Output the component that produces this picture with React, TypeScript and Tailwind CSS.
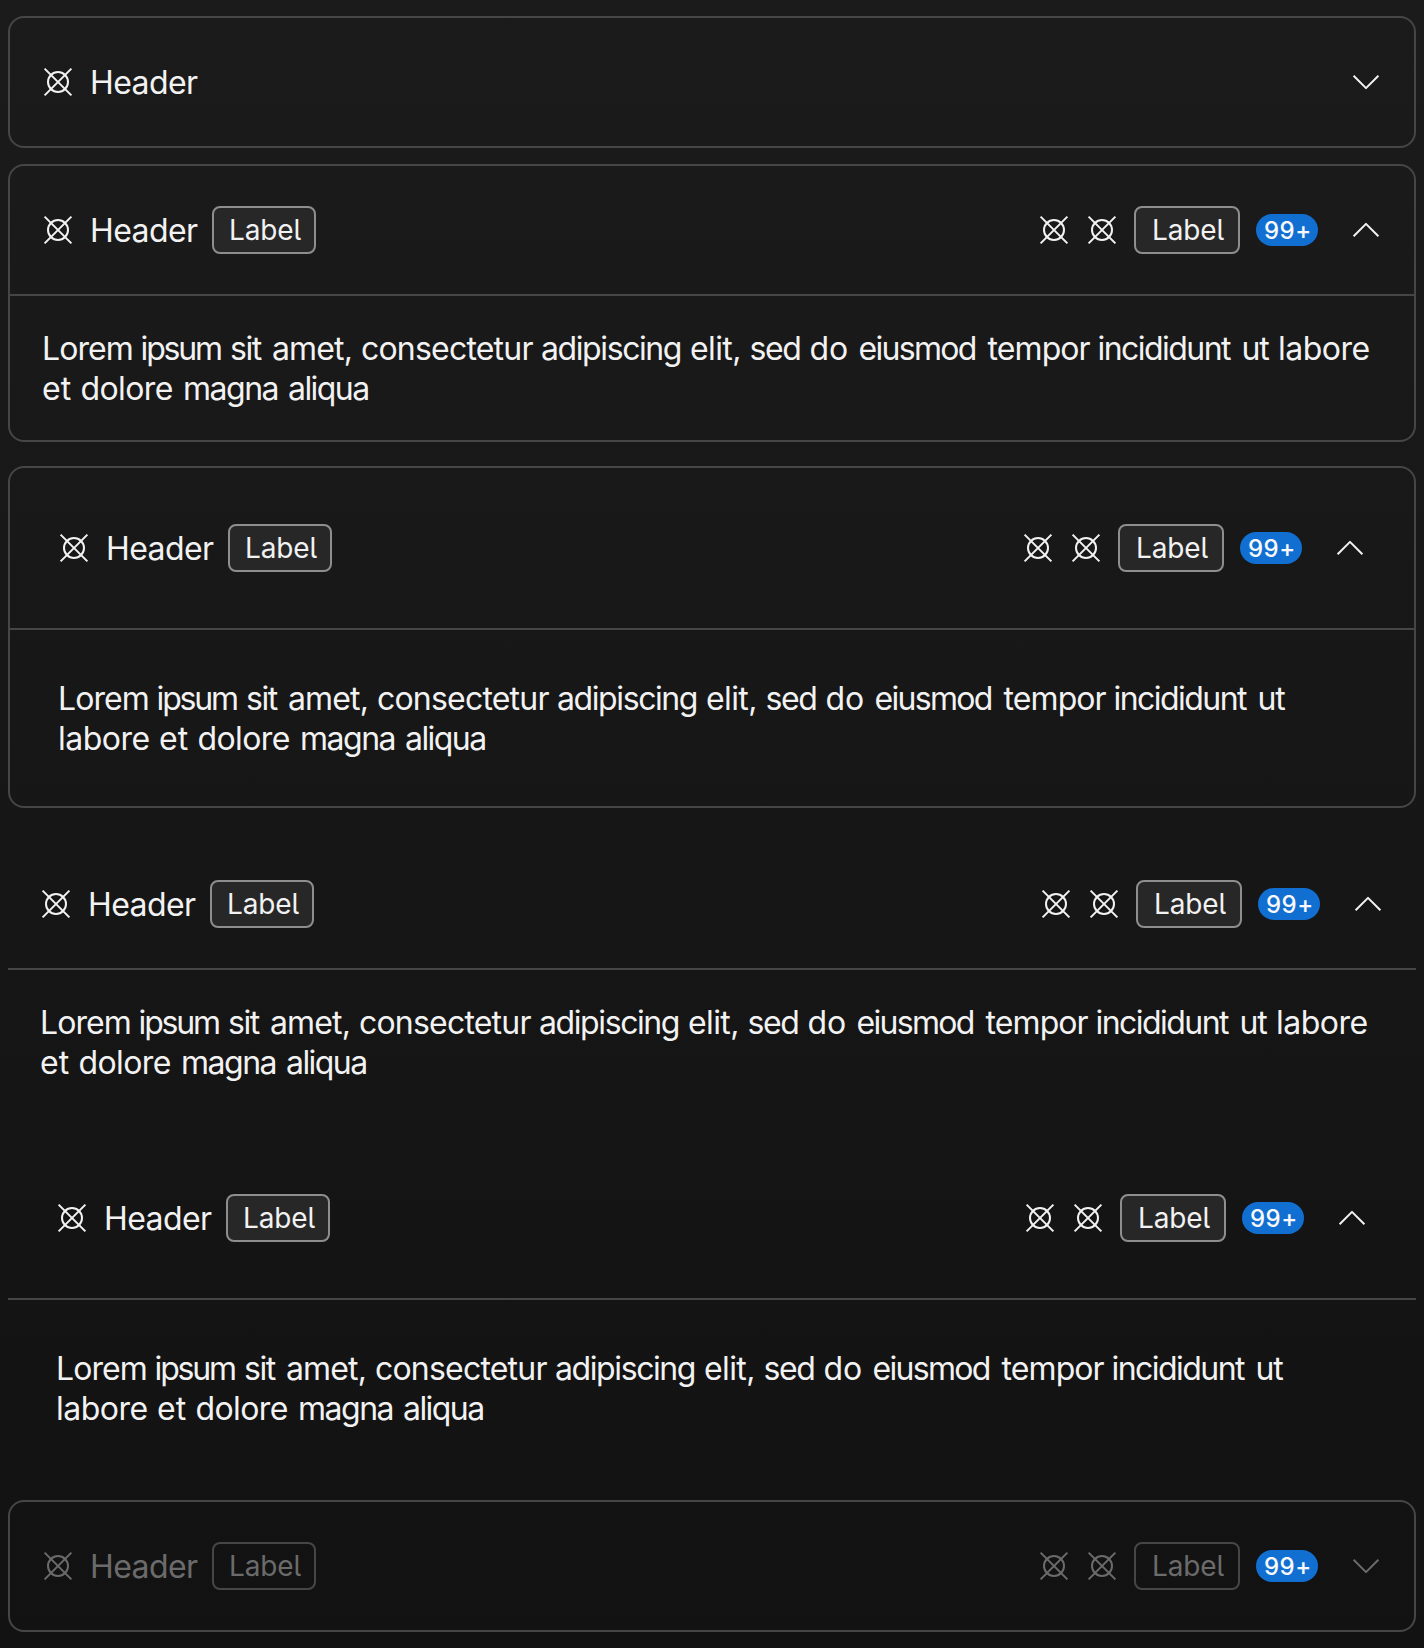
import React from "react";

function Glyph() {
  return (
    <svg viewBox="0 0 32 32" className="size-8 shrink-0" fill="none" stroke="currentColor" strokeWidth="2">
      <circle cx="16" cy="16" r="10" />
      <path d="M2.6 2.6L29.4 29.4M29.4 2.6L2.6 29.4" />
    </svg>
  );
}

function Chevron({ open }: { open: boolean }) {
  return (
    <svg
      viewBox="0 0 32 32"
      className="ml-4 size-8 shrink-0"
      fill="none"
      stroke="currentColor"
      strokeWidth="2"
      strokeLinejoin="round"
    >
      <path d={open ? "M3.6 22.3L16 9.9L28.4 22.3" : "M3.6 9.7L16 22.1L28.4 9.7"} />
    </svg>
  );
}

function Tag({ disabled, wide }: { disabled?: boolean; wide?: boolean }) {
  return (
    <span
      className={`flex h-12 shrink-0 items-center rounded-lg border-2 text-[28px] leading-none tracking-[-0.15px] [font-feature-settings:'cv05'] ${
        wide ? "w-[106px] pl-4" : "ml-[14px] w-[104px] pl-[15px]"
      } ${disabled ? "border-[#464646]" : "border-[#8e8e8e] bg-[#272727]"}`}
    >
      Label
    </span>
  );
}

// Each word with its advance (including the following space) and tracking, in pixels.
const words: [string, number, number][] = [
  ["Lorem", 98.6, -0.9],
  ["ipsum", 89.4, -2.2],
  ["sit", 42, -1.4],
  ["amet,", 89, -0.85],
  ["consectetur", 180, -0.8],
  ["adipiscing", 149, -1.4],
  ["elit,", 59.5, -0.6],
  ["sed", 60, -1.4],
  ["do", 49, 0],
  ["eiusmod", 129, -1.7],
  ["tempor", 110, -0.9],
  ["incididunt", 144, -1.55],
  ["ut", 36.5, -1.2],
  ["labore", 101, -0.5],
  ["et", 38.5, 0],
  ["dolore", 102.5, -0.6],
  ["magna", 105, -1.5],
  ["aliqua", 90, -1.55],
];

function Body({ large }: { large: boolean }) {
  return (
    <p
      className={`flex flex-wrap text-[32px] leading-10 text-[#f2f2f2] ${
        large ? "px-12 pt-[49px] pb-[47px]" : "px-8 pt-[33px] pb-[31px]"
      }`}
    >
      {words.map(([word, width, tracking]) => (
        <span key={word} className="shrink-0 whitespace-pre" style={{ width, letterSpacing: tracking }}>
          {word + " "}
        </span>
      ))}
    </p>
  );
}

type PanelProps = {
  className?: string;
  open?: boolean;
  large?: boolean;
  framed?: boolean;
  disabled?: boolean;
  extras?: boolean;
};

function Panel({ className = "", open = false, large = false, framed = true, disabled = false, extras = true }: PanelProps) {
  return (
    <section className={`${framed ? "rounded-2xl border-2 border-[#464646]" : ""} ${className}`}>
      <div
        className={`flex items-center ${large ? "h-40 px-12" : "h-32 px-8"} ${open ? "box-content border-b-2 border-[#464646]" : ""} ${
          disabled ? "text-[#6b6b6b]" : "text-[#f2f2f2]"
        }`}
      >
        <Glyph />
        <span className="ml-4 w-[108px] pt-0.5 text-[32px] leading-10 tracking-[-0.6px] whitespace-nowrap">Header</span>
        {extras && <Tag disabled={disabled} />}
        <div className="ml-auto flex items-center gap-4">
          {extras && (
            <>
              <Glyph />
              <Glyph />
              <Tag wide disabled={disabled} />
              <span className="flex h-8 w-[62px] items-center rounded-full bg-[#116fd2] pt-px pl-2 text-2xl leading-none font-medium tracking-[0.5px] text-[#f8f8f8]">
                99+
              </span>
            </>
          )}
          <Chevron open={open} />
        </div>
      </div>
      {open && <Body large={large} />}
    </section>
  );
}

export default function App() {
  return (
    <main className="h-[1648px] w-[1424px] bg-linear-to-b from-[#1b1b1b] to-[#121212] px-2 pt-4 font-['Inter',sans-serif]">
      <Panel extras={false} />
      <Panel open className="mt-4" />
      <Panel open large className="mt-6" />
      <Panel open framed={false} className="mt-8" />
      <Panel open large framed={false} className="mt-6" />
      <Panel disabled className="mt-6" />
    </main>
  );
}
